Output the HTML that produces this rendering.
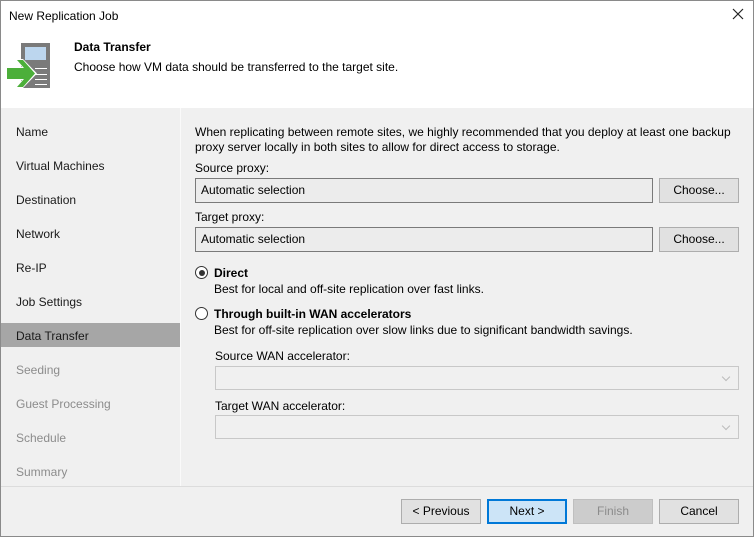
<!DOCTYPE html>
<html><head><style>
*{margin:0;padding:0;box-sizing:border-box}
body{width:754px;height:537px;overflow:hidden;background:#f0f0f0;font-family:"Liberation Sans",sans-serif;font-size:12px;color:#000;position:relative}
.a{position:absolute;white-space:nowrap}
.win{position:absolute;left:0;top:0;width:754px;height:537px;border:1px solid #8a8a8a}
.nav{color:#1a1a1a}
.dis{color:#8c8c8c}
.box{position:absolute;border:1px solid #7a7a7a;background:#ececec;padding-left:5px;line-height:22px}
.btn{position:absolute;border:1px solid #adadad;background:#e1e1e1;text-align:center;line-height:22px}
.combo{position:absolute;border:1px solid #c8c8c8;background:#f0f0f0}
.combo:after{content:"";position:absolute;right:9px;top:7px;width:5px;height:5px;border-right:1px solid #bbb;border-bottom:1px solid #bbb;transform:rotate(45deg)}
.radio{position:absolute;width:13px;height:13px;border:1px solid #333;border-radius:50%;background:#fff}
</style></head><body>
<div class="a" style="left:0;top:0;width:754px;height:108px;background:#fff"></div>
<div class="a" style="left:9px;top:9px">New Replication Job</div>
<svg class="a" style="left:732px;top:8px" width="12" height="12"><path d="M1 1L11 11M11 1L1 11" stroke="#222" stroke-width="1.2"/></svg>
<svg class="a" style="left:0;top:0" width="60" height="100">
<rect x="21" y="43" width="29" height="45" fill="#7a7a7a"/>
<rect x="25" y="47" width="21" height="13" fill="#bcd6ee"/>
<line x1="35" y1="68.5" x2="47" y2="68.5" stroke="#fff"/>
<line x1="35" y1="74.5" x2="47" y2="74.5" stroke="#fff"/>
<line x1="35" y1="79.5" x2="47" y2="79.5" stroke="#fff"/>
<line x1="35" y1="84.5" x2="47" y2="84.5" stroke="#fff"/>
<path d="M6 67 L22 67 L15 59 L23 59 L37 73.5 L23 88 L15 88 L22 80 L6 80 Z" fill="#fff"/>
<path d="M7 68 L24 68 L17 60 L23 60 L35 73.5 L23 87 L17 87 L24 79 L7 79 Z" fill="#4caf3a"/>
</svg>
<div class="a" style="left:74px;top:40px;font-weight:bold">Data Transfer</div>
<div class="a" style="left:74px;top:60px">Choose how VM data should be transferred to the target site.</div>

<div class="a" style="left:180px;top:108px;width:1px;height:378px;background:#fafafa"></div>
<div class="a" style="left:1px;top:323px;width:179px;height:24px;background:#a6a6a6"></div>
<div class="a nav" style="left:16px;top:125px">Name</div>
<div class="a nav" style="left:16px;top:159px">Virtual Machines</div>
<div class="a nav" style="left:16px;top:193px">Destination</div>
<div class="a nav" style="left:16px;top:227px">Network</div>
<div class="a nav" style="left:16px;top:261px">Re-IP</div>
<div class="a nav" style="left:16px;top:295px">Job Settings</div>
<div class="a nav" style="left:16px;top:329px">Data Transfer</div>
<div class="a dis" style="left:16px;top:363px">Seeding</div>
<div class="a dis" style="left:16px;top:397px">Guest Processing</div>
<div class="a dis" style="left:16px;top:431px">Schedule</div>
<div class="a dis" style="left:16px;top:465px">Summary</div>

<div class="a" style="left:195px;top:125px;line-height:15px">When replicating between remote sites, we highly recommended that you deploy at least one backup<br>proxy server locally in both sites to allow for direct access to storage.</div>
<div class="a" style="left:195px;top:161px">Source proxy:</div>
<div class="box" style="left:195px;top:178px;width:458px;height:25px">Automatic selection</div>
<div class="btn" style="left:659px;top:178px;width:80px;height:25px">Choose...</div>
<div class="a" style="left:195px;top:210px">Target proxy:</div>
<div class="box" style="left:195px;top:227px;width:458px;height:25px">Automatic selection</div>
<div class="btn" style="left:659px;top:227px;width:80px;height:25px">Choose...</div>

<div class="radio" style="left:195px;top:266px"><div style="position:absolute;left:2.5px;top:2.5px;width:6px;height:6px;border-radius:50%;background:#333"></div></div>
<div class="a" style="left:214px;top:266px;font-weight:bold">Direct</div>
<div class="a" style="left:214px;top:282px">Best for local and off-site replication over fast links.</div>
<div class="radio" style="left:195px;top:307px"></div>
<div class="a" style="left:214px;top:307px;font-weight:bold">Through built-in WAN accelerators</div>
<div class="a" style="left:214px;top:323px">Best for off-site replication over slow links due to significant bandwidth savings.</div>
<div class="a" style="left:215px;top:349px">Source WAN accelerator:</div>
<div class="combo" style="left:215px;top:366px;width:524px;height:24px"></div>
<div class="a" style="left:215px;top:399px">Target WAN accelerator:</div>
<div class="combo" style="left:215px;top:415px;width:524px;height:24px"></div>

<div class="a" style="left:1px;top:486px;width:752px;height:1px;background:#dcdcdc"></div>
<div class="btn" style="left:401px;top:499px;width:80px;height:25px">&lt; Previous</div>
<div class="btn" style="left:487px;top:499px;width:80px;height:25px;border:2px solid #0078d7;background:#cce4f7;line-height:21px">Next &gt;</div>
<div class="btn" style="left:573px;top:499px;width:80px;height:25px;border-color:#bfbfbf;background:#ccc;color:#8c8c8c">Finish</div>
<div class="btn" style="left:659px;top:499px;width:80px;height:25px">Cancel</div>
<div class="win"></div>
</body></html>
